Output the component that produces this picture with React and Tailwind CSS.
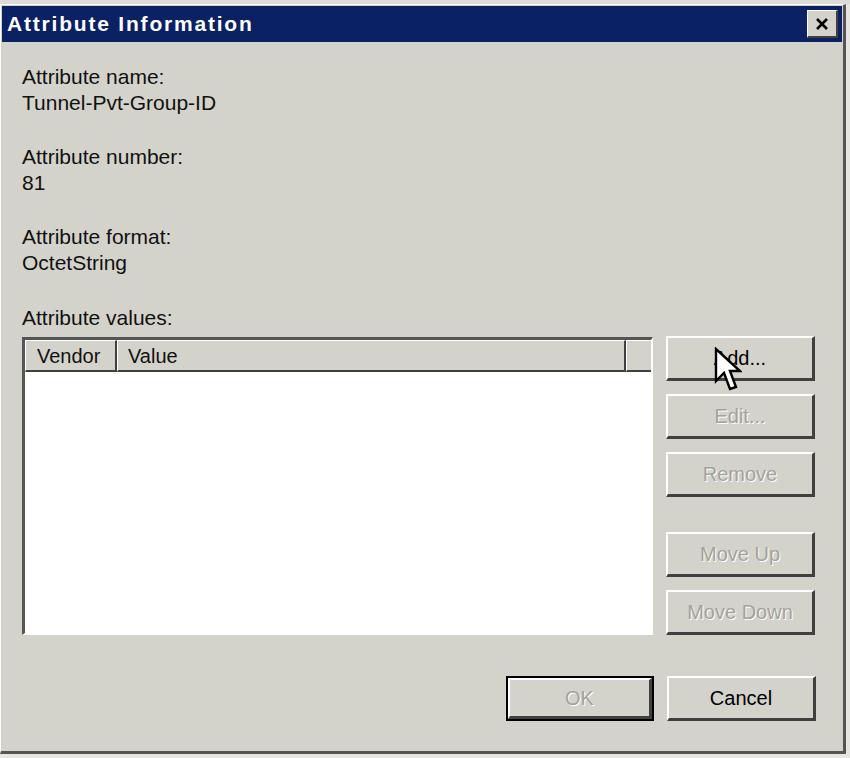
import React from 'react';

const font = { fontFamily: '"Liberation Sans", Arial, sans-serif' };

const Btn = ({ children, disabled, size = 'h-[45px] w-[149px]', className = '' }) => (
  <div
    className={`flex ${size} items-center justify-center border-t-2 border-l-2 border-t-white border-l-white border-r-[3px] border-b-[3px] border-r-[#404040] border-b-[#404040] bg-[#d4d3cb] text-[20px] ${disabled ? 'text-[#a3a29b] [text-shadow:1px_1px_0_#fff]' : 'text-black'} ${className}`}
  >
    {children}
  </div>
);

const Field = ({ label, value }) => (
  <div className="leading-[26px]">
    <div>{label}</div>
    <div>{value}</div>
  </div>
);

const Cursor = () => (
  <svg className="absolute left-[714px] top-[347px]" width="28" height="46" viewBox="0 0 14 23">
    <path d="M1 1 L1 17 L5 13 L8 21 L11 20 L8 12 L13 12 Z" fill="white" stroke="black" strokeWidth="1.2" strokeLinejoin="miter" />
  </svg>
);

export default function App() {
  return (
    <div className="relative h-[758px] w-[850px] overflow-hidden bg-[#e6e5e0]" style={font}>
      <div className="h-[4px] bg-[#dcdbd6]" />
      <div className="h-[750px] w-[846px] border-r-[3px] border-b-[3px] border-r-[#555] border-b-[#555] border-t border-l border-t-white border-l-white bg-[#d4d3cb]">
        {/* title bar */}
        <div className="mx-[1px] mt-[1px] flex h-[36px] items-center justify-between bg-[#0a2163] pl-[5px] pr-[4px]">
          <span className="text-[21px] font-bold tracking-[1.8px] text-white">Attribute Information</span>
          <div className="flex h-[28px] w-[31px] items-center justify-center border-t border-l border-t-white border-l-white border-r-2 border-b-2 border-r-[#404040] border-b-[#404040] bg-[#d4d3cb]">
            <svg width="14" height="14" viewBox="0 0 14 14">
              <path d="M2 2 L12 12 M12 2 L2 12" stroke="black" strokeWidth="2.6" />
            </svg>
          </div>
        </div>

        <div className="px-[21px] pt-[22px] text-[21px] text-[#111]">
          <div className="flex flex-col gap-[28px]">
            <Field label="Attribute name:" value="Tunnel-Pvt-Group-ID" />
            <Field label="Attribute number:" value="81" />
            <Field label="Attribute format:" value="OctetString" />
          </div>
          <div className="mt-[29px] leading-[26px]">Attribute values:</div>

          <div className="mt-[5px] flex items-start gap-[13px]">
            {/* list view */}
            <div className="mt-[1px] h-[298px] w-[631px] border-t-[3px] border-l-[3px] border-t-[#555] border-l-[#555] border-r-2 border-b-2 border-r-white border-b-white bg-white">
              <div className="flex h-[32px] bg-[#d4d3cb] text-[20px]">
                <div className="flex w-[92px] items-center border-r-2 border-b-2 border-r-[#404040] border-b-[#404040] border-t border-l border-t-white border-l-white pl-[11px]">Vendor</div>
                <div className="flex w-[509px] items-center border-r-2 border-b-2 border-r-[#404040] border-b-[#404040] border-t border-l border-t-white border-l-white pl-[10px]">Value</div>
                <div className="flex-1 border-b-2 border-b-[#404040] border-t border-l border-t-white border-l-white" />
              </div>
            </div>

            <div className="flex flex-col">
              <Btn>Add...</Btn>
              <Btn disabled className="mt-[13px]">Edit...</Btn>
              <Btn disabled className="mt-[13px]">Remove</Btn>
              <Btn disabled className="mt-[35px]">Move Up</Btn>
              <Btn disabled className="mt-[13px]">Move Down</Btn>
            </div>
          </div>

          <div className="mt-[41px] flex justify-end gap-[13px] pr-[6px]">
            <div className="border-2 border-black">
              <Btn disabled size="h-[41px] w-[144px]">OK</Btn>
            </div>
            <Btn>Cancel</Btn>
          </div>
        </div>
      </div>
      <Cursor />
    </div>
  );
}
